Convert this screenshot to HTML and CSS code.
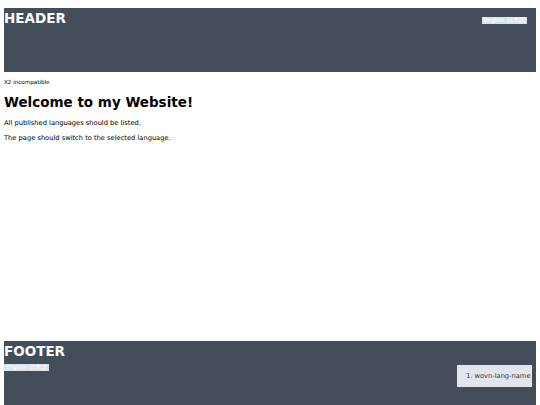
FILE: index.html
```
<!DOCTYPE html>
<html lang="en">

<head>
    <meta charset="UTF-8">
    <meta name="viewport" content="width=device-width, initial-scale=1.0">
    <title>Welcome to my Website!</title>
    <link rel="stylesheet" href="styles.css">
</head>

<body>
    <header id="header">
        <h1 class="block-title">HEADER</h1>
        <ul class="lang-list">
            <li>English</li>
            <li>日本語</li>
        </ul>
    </header>

    <div id="content">
        <p class="note">X2 incompatible</p>
        <h1>Welcome to my Website!</h1>
        <p>All published languages should be listed.</p>
        <p>The page should switch to the selected language.</p>
    </div>

    <footer id="footer">
        <h1 class="block-title">FOOTER</h1>
        <div class="footer-row">
            <ul class="lang-list">
                <li>English</li>
                <li>日本語</li>
            </ul>
            <div class="wovn-widget">1. wovn-lang-name</div>
        </div>
    </footer>
</body>

</html>
```

FILE: styles.css
```
* {
    padding: 0;
    margin: 0;
}

body {
    padding: 8px 4px 0 4px;
    font-family: "DejaVu Sans", Verdana, sans-serif;
    font-size: 6.7px;
    color: #000;
}

li {
    list-style: none;
}

#header,
#footer {
    background: #444e5b;
    color: #fff;
}

#header {
    height: 64px;
    display: flex;
    justify-content: space-between;
    align-items: flex-start;
}

.block-title {
    font-size: 13.5px;
    line-height: 16px;
    padding-top: 2px;
    font-weight: bold;
}

.lang-list {
    display: flex;
    gap: 3px;
    background: #dde3ec;
    color: #fff;
    padding: 0 2px;
    font-size: 5.6px;
    line-height: 7px;
}

#header .lang-list {
    margin: 9px 9px 0 0;
}

#content {
    height: 269px;
    box-sizing: border-box;
    padding-top: 7px;
}

#content p {
    line-height: 8px;
    margin-bottom: 7px;
}

#content .note {
    font-size: 5.6px;
    line-height: 7px;
    margin-bottom: 8px;
}

#content h1 {
    font-size: 13.5px;
    line-height: 16px;
    margin: 3px 0 9px;
}

#footer {
    height: 64px;
}

.footer-row {
    display: flex;
    justify-content: space-between;
    align-items: flex-start;
    margin-top: 5px;
}

.wovn-widget {
    margin: 1px 4px 0 0;
    width: 75px;
    height: 22px;
    box-sizing: border-box;
    padding-left: 9px;
    background: #e1e6ee;
    color: #333;
    font-size: 6.7px;
    line-height: 22px;
    white-space: nowrap;
    overflow: hidden;
}
```
